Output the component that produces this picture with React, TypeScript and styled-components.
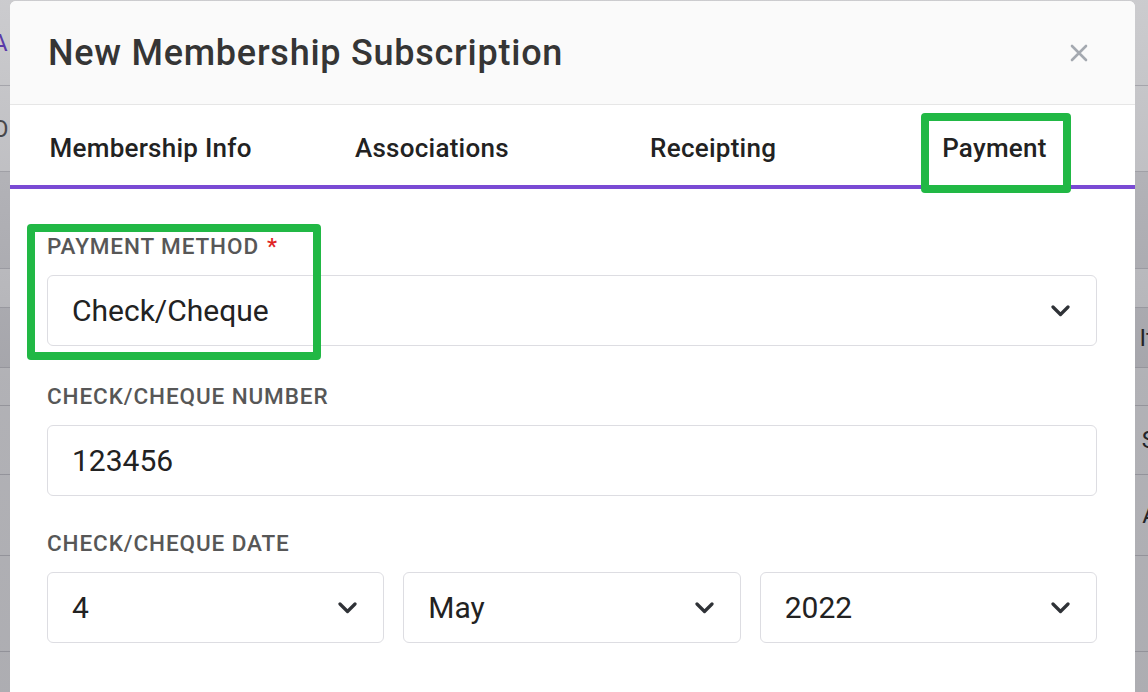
import React from 'react';
import styled, { createGlobalStyle } from 'styled-components';

const GlobalStyle = createGlobalStyle`
  html, body {
    margin: 0;
    padding: 0;
  }
  body {
    font-family: Roboto, "Liberation Sans", sans-serif;
    background: #ffffff;
  }
  * {
    box-sizing: border-box;
  }
`;

const Screen = styled.div`
  position: relative;
  width: 1148px;
  height: 692px;
  overflow: hidden;
  background: #ffffff;
`;

const PageBehind = styled.div`
  display: flex;
  flex-direction: column;
  height: 100%;
`;

const PageRow = styled.div<{ $h: number; $shade?: boolean }>`
  flex: 0 0 ${(p) => p.$h}px;
  border-bottom: 1px solid #d2d2d6;
  background: ${(p) => (p.$shade ? '#ececee' : 'transparent')};
  display: flex;
  align-items: center;
  justify-content: space-between;
  font-size: 24px;
  color: #222;
`;

const PageMark = styled.span<{ $color?: string }>`
  color: ${(p) => p.$color || '#333'};
  margin-left: -8px;
`;

const Backdrop = styled.div`
  position: absolute;
  inset: 0;
  background: linear-gradient(180deg, rgba(40, 40, 52, 0.24) 0%, rgba(40, 40, 52, 0.36) 55%, rgba(40, 40, 52, 0.38) 100%);
`;

const Modal = styled.div`
  position: absolute;
  left: 10px;
  top: 1px;
  width: 1125px;
  height: 720px;
  background: #ffffff;
  border-radius: 6px 6px 0 0;
  display: flex;
  flex-direction: column;
`;

const Header = styled.div`
  height: 104px;
  background: #fafafa;
  border-bottom: 1px solid #e6e6e6;
  border-radius: 6px 6px 0 0;
  display: flex;
  align-items: center;
  justify-content: space-between;
  padding: 0 44px 0 38px;
`;

const Title = styled.h2`
  margin: 0;
  font-size: 36px;
  font-weight: 500;
  color: #353535;
  letter-spacing: 0.75px;
`;

const CloseButton = styled.button`
  border: none;
  background: none;
  padding: 0;
  width: 24px;
  height: 24px;
  display: flex;
  align-items: center;
  justify-content: center;
  cursor: pointer;
`;

const Tabs = styled.div`
  display: grid;
  grid-template-columns: repeat(4, 1fr);
  height: 84px;
  border-bottom: 4px solid #7a4ad4;
`;

const Tab = styled.div`
  display: flex;
  align-items: center;
  justify-content: center;
  padding-top: 6px;
  font-size: 26px;
  font-weight: 500;
  color: #222222;
  letter-spacing: 0.25px;
`;

const Body = styled.div`
  padding: 44px 38px 0 37px;
  display: flex;
  flex-direction: column;
`;

const Field = styled.div<{ $mb: number }>`
  display: flex;
  flex-direction: column;
  gap: 16px;
  margin-bottom: ${(p) => p.$mb}px;
`;

const Label = styled.label`
  font-size: 22.5px;
  line-height: 26px;
  font-weight: 500;
  color: #575757;
  text-transform: uppercase;
  letter-spacing: 0.9px;
`;

const Required = styled.span`
  color: #e02424;
  margin-left: 8px;
`;

const Control = styled.div`
  height: 71px;
  border: 1px solid #dddde2;
  border-radius: 6px;
  display: flex;
  align-items: center;
  justify-content: space-between;
  padding: 0 26px 0 24px;
  font-size: 30px;
  color: #222222;
  background: #ffffff;
`;

const DateRow = styled.div`
  display: grid;
  grid-template-columns: repeat(3, 1fr);
  gap: 19px;
`;

const Highlight = styled.div`
  position: absolute;
  border: 8px solid #21b845;
  border-radius: 4px;
  pointer-events: none;
`;

const Chevron = () => (
  <svg width="19" height="12" viewBox="0 0 19 12" fill="none">
    <path d="M2 2 L9.5 9.5 L17 2" stroke="#2f3237" strokeWidth="3.2" strokeLinecap="round" strokeLinejoin="round" />
  </svg>
);

const CloseIcon = () => (
  <svg width="18" height="18" viewBox="0 0 18 18" fill="none">
    <path d="M2 2 L16 16 M16 2 L2 16" stroke="#a4a9b0" strokeWidth="2.6" strokeLinecap="round" />
  </svg>
);

const Select: React.FC<{ value: string }> = ({ value }) => (
  <Control>
    <span>{value}</span>
    <Chevron />
  </Control>
);

const tabs = ['Membership Info', 'Associations', 'Receipting', 'Payment'];

export default function App() {
  return (
    <Screen>
      <GlobalStyle />
      <PageBehind>
        <PageRow $h={86}>
          <PageMark $color="#6a3fd0">A</PageMark>
          <span />
        </PageRow>
        <PageRow $h={86}>
          <PageMark $color="#555">O</PageMark>
          <span />
        </PageRow>
        <PageRow $h={97} $shade>
          <PageMark $color="#6a3fd0">‹</PageMark>
          <span />
        </PageRow>
        <PageRow $h={39}>
          <span />
        </PageRow>
        <PageRow $h={60} $shade>
          <span />
          <span style={{ marginRight: -6 }}>It</span>
        </PageRow>
        <PageRow $h={38}>
          <span />
        </PageRow>
        <PageRow $h={69}>
          <span />
          <span style={{ marginRight: -8 }}>S</span>
        </PageRow>
        <PageRow $h={81}>
          <span />
          <span style={{ marginRight: -10 }}>A</span>
        </PageRow>
        <PageRow $h={96}>
          <span />
        </PageRow>
      </PageBehind>
      <Backdrop />
      <Modal>
        <Header>
          <Title>New Membership Subscription</Title>
          <CloseButton aria-label="Close">
            <CloseIcon />
          </CloseButton>
        </Header>
        <Tabs>
          {tabs.map((t) => (
            <Tab key={t}>{t}</Tab>
          ))}
        </Tabs>
        <Body>
          <Field $mb={37}>
            <Label>
              Payment Method<Required>*</Required>
            </Label>
            <Select value="Check/Cheque" />
          </Field>
          <Field $mb={34}>
            <Label>Check/Cheque Number</Label>
            <Control>
              <span>123456</span>
            </Control>
          </Field>
          <Field $mb={0}>
            <Label>Check/Cheque Date</Label>
            <DateRow>
              <Select value="4" />
              <Select value="May" />
              <Select value="2022" />
            </DateRow>
          </Field>
        </Body>
      </Modal>
      <Highlight style={{ left: 921, top: 113, width: 150, height: 80 }} />
      <Highlight style={{ left: 27, top: 224, width: 294, height: 136 }} />
    </Screen>
  );
}
